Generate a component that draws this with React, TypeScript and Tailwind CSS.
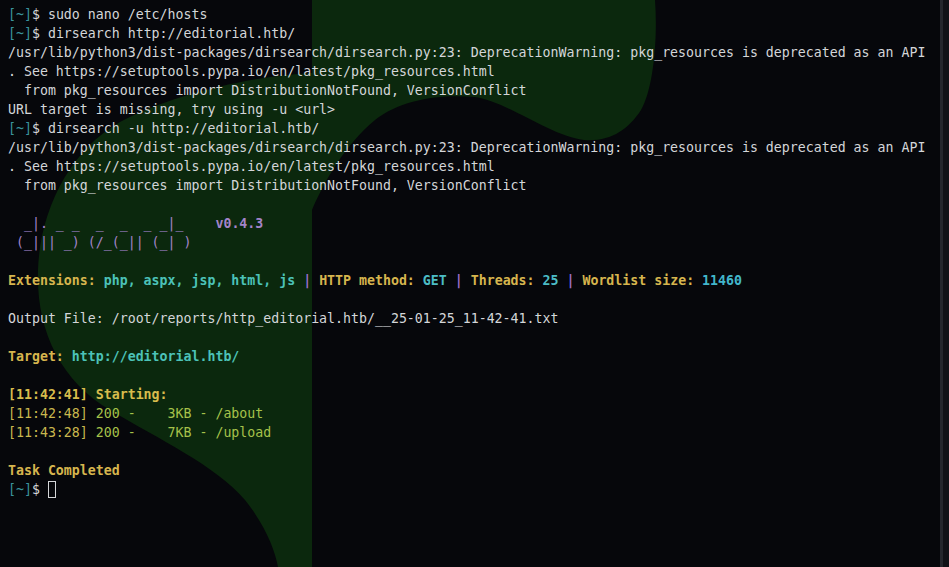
import React from 'react';

const Prompt = () => (
  <>
    <span className="text-[#3a939c]">[~]</span>
    <span className="text-[#d4d6d9]">$ </span>
  </>
);

const Pipe = () => <span className="text-[#9a6cc6]"> | </span>;

function Line({ children }: { children?: React.ReactNode }) {
  return <div className="h-[19px] leading-[19px] whitespace-pre">{children}</div>;
}

export default function App() {
  const warn = '/usr/lib/python3/dist-packages/dirsearch/dirsearch.py:23: DeprecationWarning: pkg_resources is deprecated as an API';
  const see = '. See https://setuptools.pypa.io/en/latest/pkg_resources.html';
  const from = '  from pkg_resources import DistributionNotFound, VersionConflict';

  return (
    <div className="flex h-[567px] w-full bg-[#06070b] overflow-hidden">
      <div className="relative flex-1">
        {/* wallpaper blob behind the terminal */}
        <svg className="absolute inset-0" width="940" height="567" viewBox="0 0 940 567">
          <path
            fill="#0b280d"
            d="M312,73 C250,76 170,95 120,122 C70,150 40,210 38,270 C36,330 60,380 110,410 C160,440 215,465 245,500 C265,525 275,550 278,567 L312,567 Z"
          />
          <path
            fill="#0b280d"
            d="M312,0 L655,0 C658,40 653,90 641,110 C628,130 610,142 584,140 C550,136 505,100 474,97 C440,94 400,100 375,120 C345,145 325,180 312,210 Z"
          />
        </svg>

        <div className="relative pl-2 pt-[5px] font-['DejaVu_Sans_Mono',monospace] text-[13.25px] text-[#d4d6d9]">
          <Line><Prompt />sudo nano /etc/hosts</Line>
          <Line><Prompt />dirsearch http://editorial.htb/</Line>
          <Line>{warn}</Line>
          <Line>{see}</Line>
          <Line>{from}</Line>
          <Line>URL target is missing, try using -u &lt;url&gt;</Line>
          <Line><Prompt />dirsearch -u http://editorial.htb/</Line>
          <Line>{warn}</Line>
          <Line>{see}</Line>
          <Line>{from}</Line>
          <Line />
          <Line>
            <span className="text-[#a384c9]">{'  _|. _ _  _  _  _ _|_    '}</span>
            <span className="text-[#a384c9] font-bold">v0.4.3</span>
          </Line>
          <Line><span className="text-[#a384c9]">{' (_||| _) (/_(_|| (_| )'}</span></Line>
          <Line />
          <Line>
            <span className="font-bold">
              <span className="text-[#d6b54e]">Extensions: </span>
              <span className="text-[#4cc2b8]">php, aspx, jsp, html, js</span>
              <Pipe />
              <span className="text-[#d6b54e]">HTTP method: </span>
              <span className="text-[#4cbcc6]">GET</span>
              <Pipe />
              <span className="text-[#d6b54e]">Threads: </span>
              <span className="text-[#4cbcc6]">25</span>
              <Pipe />
              <span className="text-[#d6b54e]">Wordlist size: </span>
              <span className="text-[#42b6cc]">11460</span>
            </span>
          </Line>
          <Line />
          <Line>Output File: /root/reports/http_editorial.htb/__25-01-25_11-42-41.txt</Line>
          <Line />
          <Line>
            <span className="font-bold text-[#d6b54e]">Target: </span>
            <span className="font-bold text-[#4cc2b8]">http://editorial.htb/</span>
          </Line>
          <Line />
          <Line><span className="font-bold text-[#d8bc4c]">[11:42:41] Starting:</span></Line>
          <Line>
            <span className="text-[#c9b74e]">[11:42:48] </span>
            <span className="text-[#a6c24a]">200 -    3KB - /about</span>
          </Line>
          <Line>
            <span className="text-[#c9b74e]">[11:43:28] </span>
            <span className="text-[#a6c24a]">200 -    7KB - /upload</span>
          </Line>
          <Line />
          <Line><span className="font-bold text-[#d6b54e]">Task Completed</span></Line>
          <div className="flex h-[19px] items-center leading-[19px] whitespace-pre">
            <Prompt />
            <span className="inline-block h-[17px] w-[8px] border border-[#d4d6d9]" />
          </div>
        </div>
      </div>
      <div className="w-[3px] bg-[#24272d]" />
      <div className="w-[6px] bg-[#101217]" />
    </div>
  );
}
